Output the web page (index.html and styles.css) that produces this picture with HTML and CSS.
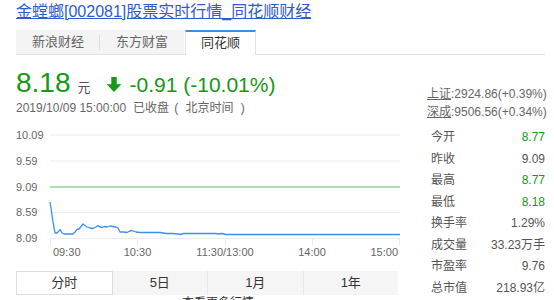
FILE: index.html
```html
<!DOCTYPE html>
<html lang="zh-CN">
<head>
    <meta charset="UTF-8">
    <meta name="viewport" content="width=device-width, initial-scale=1.0">
    <title>金螳螂[002081]股票实时行情</title>
    <link rel="stylesheet" href="styles.css">
</head>
<body>
    <h1 class="title"><a href="#">金螳螂[002081]股票实时行情_同花顺财经</a></h1>

    <div class="tabs">
        <div class="tab sep">新浪财经</div>
        <div class="tab">东方财富</div>
        <div class="tab active">同花顺</div>
    </div>

    <div class="quote">
        <div class="quote-main">
            <div class="price-row">
                <span class="price">8.18</span>
                <span class="unit">元</span>
                <svg class="arrow" width="16" height="17" viewBox="0 0 16 17">
                    <path d="M5.3 1h5.4v7.2h4.6L8 16 0.7 8.2h4.6z" fill="#139913"/>
                </svg>
                <span class="change">-0.91 (-10.01%)</span>
            </div>
            <div class="time"><span>2019/10/09 15:00:00</span><span class="status">已收盘</span><span class="zone">( 北京时间 )</span></div>
        </div>
        <div class="index">
            <div><a href="#">上证</a>:2924.86(+0.39%)</div>
            <div><a href="#">深成</a>:9506.56(+0.34%)</div>
        </div>
    </div>

    <div class="main">
        <div class="chart-col">
            <svg class="chart" width="384" height="145" viewBox="0 0 384 145">
                <g class="grid">
                    <line x1="34" y1="15" x2="384" y2="15"/>
                    <line x1="34" y1="41" x2="384" y2="41"/>
                    <line x1="34" y1="92.5" x2="384" y2="92.5"/>
                    <line x1="34" y1="118.5" x2="384" y2="118.5"/>
                    <line x1="34.5" y1="118" x2="34.5" y2="125"/>
                    <line x1="121.5" y1="118" x2="121.5" y2="125"/>
                    <line x1="209.5" y1="118" x2="209.5" y2="125"/>
                    <line x1="296.5" y1="118" x2="296.5" y2="125"/>
                    <line x1="383.5" y1="118" x2="383.5" y2="125"/>
                </g>
                <line class="prev-close" x1="34" y1="67" x2="384" y2="67"/>
                <polyline class="line" points="34,82 35,88 37,102 39,113 41,113 43,111 44,109.5 46,113 48,114 52,114 57,114 59,112 61,109.5 63,109 65,106.5 67,104 69,105.5 71,107 74,108 77,108.5 80,107 82,105.5 84,107 86,107.5 88,106.5 91,107 94,106 97,106.5 100,107 102,108 104,112 108,112 111,112.5 114,111 116,110.5 120,112 124,112.5 130,112.5 138,112.5 144,112.5 150,113.5 156,113.5 162,114 164,114.5 168,113.5 172,113.5 180,113.5 190,113.5 200,113.5 202,114 206,113.5 210,114.5 230,114.5 260,114.5 300,114.5 340,114.5 384,114.5"/>
                <g class="labels">
                    <text x="0" y="18.8">10.09</text>
                    <text x="0" y="44.8">9.59</text>
                    <text x="0" y="70.8">9.09</text>
                    <text x="0" y="96.3">8.59</text>
                    <text x="0" y="122">8.09</text>
                    <text x="37" y="136">09:30</text>
                    <text x="121.5" y="136" text-anchor="middle">10:30</text>
                    <text x="209" y="136" text-anchor="middle">11:30/13:00</text>
                    <text x="296" y="136" text-anchor="middle">14:00</text>
                    <text x="382" y="136" text-anchor="end">15:00</text>
                </g>
            </svg>
            <div class="periods">
                <div class="period active">分时</div>
                <div class="period">5日</div>
                <div class="period">1月</div>
                <div class="period">1年</div>
            </div>
            <div class="more">查看更多行情</div>
        </div>

        <div class="stats">
            <div class="stat"><span>今开</span><span class="down">8.77</span></div>
            <div class="stat"><span>昨收</span><span>9.09</span></div>
            <div class="stat"><span>最高</span><span class="down">8.77</span></div>
            <div class="stat"><span>最低</span><span class="down">8.18</span></div>
            <div class="stat"><span>换手率</span><span>1.29%</span></div>
            <div class="stat"><span>成交量</span><span>33.23万手</span></div>
            <div class="stat"><span>市盈率</span><span>9.76</span></div>
            <div class="stat"><span>总市值</span><span>218.93亿</span></div>
        </div>
    </div>
</body>
</html>
```

FILE: styles.css
```css
body {
    margin: 0;
    font-family: "Liberation Sans", Arial, "Noto Sans CJK SC", sans-serif;
    color: #333;
    background-color: white;
    overflow: hidden;
}

.title {
    margin: 0;
    padding: 2px 16px 0;
    font-size: 16px;
    line-height: 20px;
    font-weight: normal;
}

.title a {
    color: #2e5bd0;
    text-decoration: underline;
}

.tabs {
    display: flex;
    margin: 8px 9px 0 16px;
    border-bottom: 1px solid #e2e2e2;
}

.tab {
    height: 24px;
    line-height: 24px;
    padding: 0 16px;
    font-size: 13px;
    color: #666;
    background-color: #f4f4f4;
    position: relative;
}

.tab.sep::after {
    content: "";
    position: absolute;
    right: 0;
    top: 5px;
    height: 15px;
    border-right: 1px solid #ddd;
}

.tab.active {
    height: 23px;
    line-height: 22px;
    margin-bottom: -1px;
    padding: 0 15px;
    color: #333;
    background-color: white;
    border-top: 2px solid #3a8ee6;
    border-left: 1px solid #e2e2e2;
    border-right: 1px solid #e2e2e2;
    margin-left: 1px;
}

.quote {
    display: flex;
    height: 53px;
    margin-top: 12px;
    padding-left: 16px;
}

.quote-main {
    width: 384px;
}

.price-row {
    display: flex;
    align-items: baseline;
    height: 32px;
    line-height: 32px;
    color: #139913;
}

.price {
    font-size: 28px;
}

.unit {
    font-size: 13px;
    color: #555;
    margin-left: 7px;
}

.arrow {
    align-self: center;
    margin: 2px 0 0 15px;
}

.change {
    font-size: 21px;
    margin-left: 8px;
}

.time {
    margin-top: 1px;
    font-size: 12px;
    line-height: 16px;
    color: #666;
    white-space: nowrap;
}

.status {
    margin-left: 7px;
}

.zone {
    margin-left: 5px;
    word-spacing: 4px;
}

.index {
    margin-left: 27px;
    padding-top: 18px;
    font-size: 12px;
    line-height: 18px;
    color: #666;
    white-space: nowrap;
}

.index a {
    color: #666;
    text-decoration: underline;
}

.main {
    display: flex;
    padding-left: 16px;
}

.chart-col {
    width: 384px;
}

.chart {
    display: block;
}

.grid line {
    stroke: #ececec;
    stroke-width: 1;
}

.prev-close {
    stroke: #62b862;
    stroke-width: 1;
}

.line {
    fill: none;
    stroke: #3d8ef2;
    stroke-width: 1.3;
    stroke-linejoin: round;
}

.labels text {
    font-family: "Liberation Sans", Arial, sans-serif;
    font-size: 11px;
    fill: #666;
}

.periods {
    display: flex;
    width: 382px;
    margin-top: 6px;
    background-color: #f5f5f5;
}

.period {
    flex: 1;
    height: 24px;
    line-height: 24px;
    text-align: center;
    font-size: 13px;
    color: #333;
    border-left: 1px solid #e8e8e8;
}

.period:first-child {
    border-left: none;
}

.period.active {
    height: 22px;
    line-height: 22px;
    background-color: white;
    border: 1px solid #ddd;
}

.period.active + .period {
    border-left: none;
}

.more {
    text-align: center;
    font-size: 12px;
    line-height: 14px;
    margin-top: 1px;
    margin-left: 20px;
    color: #333;
}

.stats {
    width: 114px;
    margin-left: 31px;
    padding-top: 7px;
    font-size: 12px;
    color: #555;
}

.stat {
    display: flex;
    justify-content: space-between;
    height: 21.5px;
    line-height: 21.5px;
}

.stat span:last-child {
    color: #555;
}

.stat .down {
    color: #139913 !important;
}
```
